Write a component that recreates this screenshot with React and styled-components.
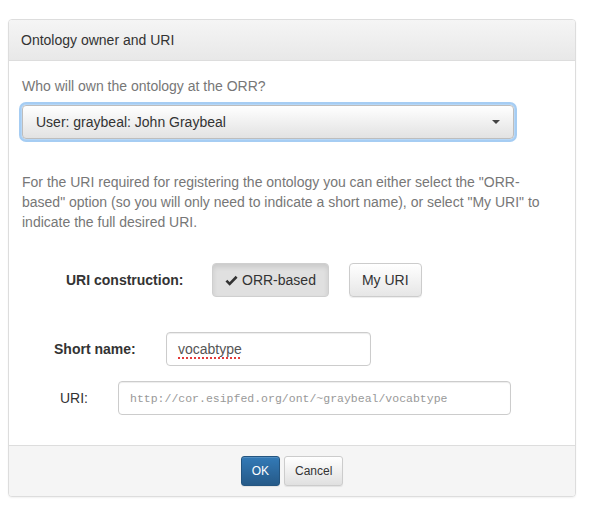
import React from "react";
import styled, { createGlobalStyle } from "styled-components";

const GlobalStyle = createGlobalStyle`
  body {
    margin: 0;
    background: #ffffff;
    font-family: "Liberation Sans", Arial, sans-serif;
    color: #333333;
  }
`;

function App() {
  return (
    <>
      <GlobalStyle />
      <Page>
        <Panel>
          <PanelHeading>Ontology owner and URI</PanelHeading>

          <PanelBody>
            <Hint>Who will own the ontology at the ORR?</Hint>
            <SelectBox>
              <span>User: graybeal: John Graybeal</span>
              <Caret />
            </SelectBox>

            <Paragraph>
              For the URI required for registering the ontology you can either
              select the "ORR-based" option (so you will only need to indicate a
              short name), or select "My URI" to indicate the full desired URI.
            </Paragraph>

            <FieldRow $top={31}>
              <FieldLabel $indent={44} $width={146} $bold>
                URI construction:
              </FieldLabel>
              <ToggleGroup>
                <ToggleButton $active>
                  <CheckIcon viewBox="0 0 14 14">
                    <path d="M1.5 7.2 L5 10.6 L12.5 3" />
                  </CheckIcon>
                  ORR-based
                </ToggleButton>
                <ToggleButton>My URI</ToggleButton>
              </ToggleGroup>
            </FieldRow>

            <FieldRow $top={35}>
              <FieldLabel $indent={32} $width={112} $bold>
                Short name:
              </FieldLabel>
              <TextBox $width={205}>
                <Misspelled>vocabtype</Misspelled>
              </TextBox>
            </FieldRow>

            <FieldRow $top={15}>
              <FieldLabel $indent={38} $width={58}>
                URI:
              </FieldLabel>
              <TextBox $width={393} $mono>
                http://cor.esipfed.org/ont/~graybeal/vocabtype
              </TextBox>
            </FieldRow>
          </PanelBody>

          <PanelFooter>
            <SmallButton $primary>OK</SmallButton>
            <SmallButton>Cancel</SmallButton>
          </PanelFooter>
        </Panel>
      </Page>
    </>
  );
}

export default App;

const Page = styled.div`
  padding: 19px 15px 20px 8px;
`;

const Panel = styled.div`
  width: 568px;
  box-sizing: border-box;
  border: 1px solid #dddddd;
  border-radius: 4px;
  background: #ffffff;
  box-shadow: 0 1px 2px rgba(0, 0, 0, 0.06);
  overflow: hidden;
`;

const PanelHeading = styled.div`
  height: 41px;
  box-sizing: border-box;
  padding: 0 12px;
  display: flex;
  align-items: center;
  font-size: 14px;
  color: #333333;
  background: linear-gradient(to bottom, #f5f5f5 0%, #e8e8e8 100%);
  border-bottom: 1px solid #dddddd;
`;

const PanelBody = styled.div`
  padding: 15px 20px 30px 13px;
`;

const Hint = styled.div`
  font-size: 14px;
  line-height: 20px;
  color: #777777;
`;

const SelectBox = styled.div`
  margin-top: 9px;
  width: 492px;
  height: 34px;
  box-sizing: border-box;
  padding: 0 13px 0 13px;
  display: flex;
  align-items: center;
  justify-content: space-between;
  font-size: 14px;
  color: #333333;
  border: 1px solid #bdbdbd;
  border-radius: 4px;
  background: linear-gradient(to bottom, #ffffff 0%, #e2e2e2 100%);
  box-shadow: 0 0 0 1px #b6d7f7, 0 0 0 3px #a6cdf3;
`;

const Caret = styled.span`
  width: 0;
  height: 0;
  border-left: 4px solid transparent;
  border-right: 4px solid transparent;
  border-top: 4px solid #444444;
`;

const Paragraph = styled.p`
  margin: 33px 0 0 0;
  font-size: 14px;
  line-height: 20px;
  color: #777777;
`;

const FieldRow = styled.div`
  display: flex;
  align-items: center;
  margin-top: ${(p) => p.$top}px;
`;

const FieldLabel = styled.div`
  box-sizing: border-box;
  padding-left: ${(p) => p.$indent}px;
  width: ${(p) => p.$indent + p.$width}px;
  font-size: 14px;
  font-weight: ${(p) => (p.$bold ? 700 : 400)};
  color: #333333;
`;

const ToggleGroup = styled.div`
  display: flex;
  gap: 20px;
`;

const ToggleButton = styled.div`
  height: 34px;
  box-sizing: border-box;
  padding: 0 12px;
  display: flex;
  align-items: center;
  justify-content: center;
  gap: 4px;
  font-size: 14px;
  color: #333333;
  border: 1px solid ${(p) => (p.$active ? "#cfcfcf" : "#cccccc")};
  border-radius: 4px;
  background: ${(p) =>
    p.$active
      ? "#e0e0e0"
      : "linear-gradient(to bottom, #ffffff 0%, #e6e6e6 100%)"};
  box-shadow: ${(p) =>
    p.$active
      ? "inset 0 3px 5px rgba(0, 0, 0, 0.1)"
      : "inset 0 1px 0 rgba(255,255,255,.15), 0 1px 1px rgba(0,0,0,.075)"};
`;

const CheckIcon = styled.svg`
  width: 13px;
  height: 13px;
  fill: none;
  stroke: #333333;
  stroke-width: 2.8;
  stroke-linecap: butt;
  stroke-linejoin: miter;
`;

const TextBox = styled.div`
  width: ${(p) => p.$width}px;
  height: 34px;
  box-sizing: border-box;
  padding: 0 11px;
  display: flex;
  align-items: center;
  border: 1px solid #cccccc;
  border-radius: 4px;
  background: #ffffff;
  box-shadow: inset 0 1px 1px rgba(0, 0, 0, 0.075);
  font-family: ${(p) =>
    p.$mono ? '"Liberation Mono", "DejaVu Sans Mono", monospace' : "inherit"};
  font-size: ${(p) => (p.$mono ? "11.5px" : "14px")};
  color: ${(p) => (p.$mono ? "#999999" : "#555555")};
`;

const Misspelled = styled.span`
  text-decoration: underline dotted #e23b3b;
  text-decoration-thickness: 2px;
  text-underline-offset: 3px;
`;

const PanelFooter = styled.div`
  height: 51px;
  box-sizing: border-box;
  display: flex;
  align-items: center;
  justify-content: center;
  gap: 4px;
  background: #f5f5f5;
  border-top: 1px solid #dddddd;
`;

const SmallButton = styled.div`
  height: 30px;
  box-sizing: border-box;
  padding: 0 10px;
  display: flex;
  align-items: center;
  justify-content: center;
  font-size: 12px;
  border-radius: 3px;
  color: ${(p) => (p.$primary ? "#ffffff" : "#333333")};
  border: 1px solid ${(p) => (p.$primary ? "#245580" : "#cccccc")};
  background: ${(p) =>
    p.$primary
      ? "linear-gradient(to bottom, #337ab7 0%, #265a88 100%)"
      : "linear-gradient(to bottom, #ffffff 0%, #e0e0e0 100%)"};
  box-shadow: inset 0 1px 0 rgba(255, 255, 255, 0.15),
    0 1px 1px rgba(0, 0, 0, 0.075);
`;
